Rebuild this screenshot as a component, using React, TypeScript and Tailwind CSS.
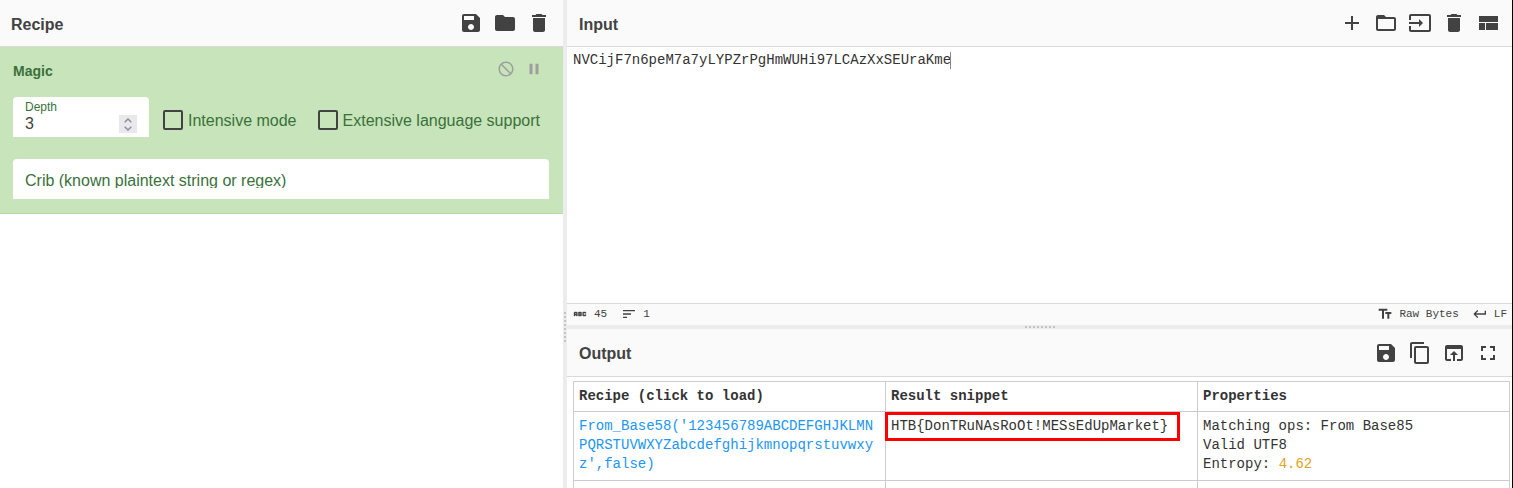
import React from "react";

const paths = {
  save: "M17 3H5c-1.11 0-2 .9-2 2v14c0 1.1.89 2 2 2h14c1.1 0 2-.9 2-2V7l-4-4zm-5 16c-1.66 0-3-1.34-3-3s1.34-3 3-3 3 1.34 3 3-1.34 3-3 3zm3-10H5V5h10v4z",
  folder: "M10 4H4c-1.1 0-1.99.9-1.99 2L2 18c0 1.1.9 2 2 2h16c1.1 0 2-.9 2-2V8c0-1.1-.9-2-2-2h-8l-2-2z",
  trash: "M6 19c0 1.1.9 2 2 2h8c1.1 0 2-.9 2-2V7H6v12zM19 4h-3.5l-1-1h-5l-1 1H5v2h14V4z",
  add: "M19 13h-6v6h-2v-6H5v-2h6V5h2v6h6v2z",
  folderOpen: "M20 6h-8l-2-2H4c-1.1 0-1.99.9-1.99 2L2 18c0 1.1.9 2 2 2h16c1.1 0 2-.9 2-2V8c0-1.1-.9-2-2-2zm0 12H4V8h16v10z",
  input: "M21 3.01H3c-1.1 0-2 .9-2 2V9h2V4.99h18v14.03H3V15H1v4.01c0 1.1.9 1.98 2 1.98h18c1.1 0 2-.88 2-1.98v-14c0-1.11-.9-2-2-2zM11 16l4-4-4-4v3H1v2h10v3z",
  layout: "M3 19h6v-7H3v7zm7 0h12v-7H10v7zM3 5v6h19V5H3z",
  copy: "M16 1H4c-1.1 0-2 .9-2 2v14h2V3h12V1zm3 4H8c-1.1 0-2 .9-2 2v14c0 1.1.9 2 2 2h11c1.1 0 2-.9 2-2V7c0-1.1-.9-2-2-2zm0 16H8V7h11v14z",
  openInBrowser: "M19 4H5c-1.11 0-2 .9-2 2v12c0 1.1.89 2 2 2h4v-2H5V8h14v10h-4v2h4c1.1 0 2-.9 2-2V6c0-1.1-.89-2-2-2zm-7 6l-4 4h3v6h2v-6h3l-4-4z",
  fullscreen: "M7 14H5v5h5v-2H7v-3zm-2-4h2V7h3V5H5v5zm12 7h-3v2h5v-5h-2v3zM14 5v2h3v3h2V5h-5z",
  sort: "M3 18h6v-2H3v2zM3 6v2h18V6H3zm0 7h12v-2H3v2z",
  textFields: "M2.5 4v3h5v12h3V7h5V4h-13zm19 5h-9v3h3v7h3v-7h3V9z",
  enter: "M19 7v4H5.83l3.58-3.59L8 6l-6 6 6 6 1.41-1.41L5.83 13H21V7z",
  disable: "M12 2C6.48 2 2 6.48 2 12s4.48 10 10 10 10-4.48 10-10S17.52 2 12 2zm0 18c-4.42 0-8-3.58-8-8 0-1.85.63-3.55 1.69-4.9L16.9 18.31C15.55 19.37 13.85 20 12 20zm6.31-3.1L7.1 5.69C8.45 4.63 10.15 4 12 4c4.42 0 8 3.58 8 8 0 1.85-.63 3.55-1.69 4.9z",
  pause: "M6 19h4V5H6v14zm8-14v14h4V5h-4z",
  abc: "M21 11h-1.5v-.5h-2v3h2V13H21v1c0 .55-.45 1-1 1h-3c-.55 0-1-.45-1-1v-4c0-.55.45-1 1-1h3c.55 0 1 .45 1 1v1zM8 10v5H6.5v-1.5h-2V15H3v-5c0-.55.45-1 1-1h3c.55 0 1 .45 1 1zm-1.5.5h-2V12h2v-1.5zM13.5 12c.55 0 1 .45 1 1v1c0 .55-.45 1-1 1h-4V9h4c.55 0 1 .45 1 1v1c0 .55-.45 1-1 1zM11 10.5v.75h2v-.75h-2zm2 2.25h-2v.75h2v-.75z",
};

type IconName = keyof typeof paths;

function Icon({ name, className }: { name: IconName; className: string }) {
  return (
    <svg viewBox="0 0 24 24" className={className} fill="currentColor" aria-hidden="true">
      <path d={paths[name]} />
    </svg>
  );
}

function Toolbar({ items }: { items: [IconName, string][] }) {
  return (
    <div className="flex gap-[10px]">
      {items.map(([name, label]) => (
        <button key={label} type="button" aria-label={label} className="block">
          <Icon name={name} className="block size-6" />
        </button>
      ))}
    </div>
  );
}

function Title({ children }: { children: string }) {
  return <h2 className="pt-[3px] text-base font-bold">{children}</h2>;
}

function Dots({ className }: { className: string }) {
  return (
    <div className={className}>
      {Array.from({ length: 8 }, (_, i) => (
        <span key={i} className="size-[2px] bg-[#c4c4c4]" />
      ))}
    </div>
  );
}

function Check({ label }: { label: string }) {
  return (
    <label className="flex items-center gap-[5px] whitespace-nowrap text-base text-[#3a713b]">
      <input
        type="checkbox"
        className="size-5 shrink-0 appearance-none rounded-[2px] border-2 border-[#424242]"
      />
      <span className="pt-[2px]">{label}</span>
    </label>
  );
}

function RecipePane() {
  return (
    <section className="min-w-0">
      <header className="flex h-[47px] items-center justify-between border-b border-[#dadada] bg-[#fafafa] pr-3 pl-[11px]">
        <Title>Recipe</Title>
        <Toolbar
          items={[
            ["save", "Save recipe"],
            ["folder", "Load recipe"],
            ["trash", "Clear recipe"],
          ]}
        />
      </header>
      <div className="border-b border-[#b3dba1] bg-[#c8e4ba] py-[13px] pr-[14px] pl-[13px]">
        <div className="flex h-[18px] items-center justify-between">
          <h3 className="pt-[4px] text-sm font-bold text-[#3a713b]">Magic</h3>
          <div className="flex gap-[10px] pr-[6px] text-[#9e9e9e]">
            <button type="button" aria-label="Disable operation">
              <Icon name="disable" className="block size-[18px]" />
            </button>
            <button type="button" aria-label="Set breakpoint">
              <Icon name="pause" className="block size-[18px]" />
            </button>
          </div>
        </div>
        <div className="mt-[19px] flex items-center">
          <div className="flex h-10 w-[136px] flex-col rounded-t bg-white px-3 pt-[3px]">
            <label htmlFor="depth" className="text-xs leading-[14px] text-[#3a713b]">
              Depth
            </label>
            <div className="flex h-5 items-center justify-between">
              <input
                id="depth"
                type="text"
                inputMode="numeric"
                defaultValue="3"
                className="h-5 w-16 text-base leading-5 outline-none"
              />
              <div className="flex size-[18px] flex-col items-center justify-center gap-[3px] bg-[#e9e9ed] text-[#8f8f9d]">
                <button type="button" aria-label="Increase depth">
                  <svg viewBox="0 0 8 5" className="block h-[5px] w-2" fill="none" stroke="currentColor" strokeWidth="1.5">
                    <path d="M.7 4.3 4 1l3.300 3.300" />
                  </svg>
                </button>
                <button type="button" aria-label="Decrease depth">
                  <svg viewBox="0 0 8 5" className="block h-[5px] w-2" fill="none" stroke="currentColor" strokeWidth="1.5">
                    <path d="M.7.7 4 4 7.300.7" />
                  </svg>
                </button>
              </div>
            </div>
          </div>
          <div className="ml-[14px] flex gap-[21px] pt-[6px]">
            <Check label="Intensive mode" />
            <Check label="Extensive language support" />
          </div>
        </div>
        <div className="mt-[22px] mb-px h-10 rounded-t bg-white px-3">
          <div className="h-[29px] overflow-hidden pt-3">
            <input
              type="text"
              aria-label="Crib (known plaintext string or regex)"
              placeholder="Crib (known plaintext string or regex)"
              className="block h-5 w-full text-base leading-5 outline-none placeholder:text-[#3a713b]"
            />
          </div>
        </div>
      </div>
    </section>
  );
}

function InputPane() {
  return (
    <section className="flex min-h-0 flex-col">
      <header className="flex h-[47px] shrink-0 items-center justify-between border-b border-[#dadada] bg-[#fafafa] px-3">
        <Title>Input</Title>
        <Toolbar
          items={[
            ["add", "Add input tab"],
            ["folderOpen", "Open folder"],
            ["input", "Open file"],
            ["trash", "Clear input"],
            ["layout", "Reset layout"],
          ]}
        />
      </header>
      <div className="flex flex-1 items-start overflow-hidden bg-white pt-1 pl-[6px]">
        <textarea
          aria-label="Input text"
          rows={1}
          spellCheck={false}
          defaultValue="NVCijF7n6peM7a7yLYPZrPgHmWUHi97LCAzXxSEUraKme"
          className="block resize-none overflow-hidden whitespace-pre font-['Liberation_Mono',monospace] text-sm leading-[18px] text-[#333] outline-none [field-sizing:content]"
        />
        <span className="-ml-px mt-px h-[17px] w-px bg-[#888]" />
      </div>
      <footer className="flex h-[22px] shrink-0 items-center justify-between border-t border-[#dadada] bg-[#fafafa] px-[5px] font-['Liberation_Mono',monospace] text-[11px]">
        <div className="flex items-center gap-[14px]">
          <span className="flex items-center gap-[6px]">
            <Icon name="abc" className="mb-[2px] size-4 stroke-current stroke-[0.6]" />
            45
          </span>
          <span className="flex items-center gap-[6px]">
            <Icon name="sort" className="mb-[2px] size-4" />1
          </span>
        </div>
        <div className="flex items-center gap-[13px]">
          <button type="button" className="flex items-center gap-[6px]">
            <Icon name="textFields" className="mb-[2px] size-4" />
            Raw Bytes
          </button>
          <button type="button" className="flex items-center gap-[6px]">
            <Icon name="enter" className="mb-[2px] size-4" />
            LF
          </button>
        </div>
      </footer>
    </section>
  );
}

const headCell = "border border-[#ccc] px-[5px] py-[5px] text-left align-top";
const bodyCell = "border border-[#ccc] px-[5px] pt-[5px] pb-[6px] text-left align-top";

function OutputPane() {
  return (
    <section className="min-h-0 overflow-hidden bg-white">
      <header className="flex h-12 items-center justify-between border-b border-[#dadada] bg-[#fafafa] px-3">
        <Title>Output</Title>
        <Toolbar
          items={[
            ["save", "Save output"],
            ["copy", "Copy output"],
            ["openInBrowser", "Move output to input"],
            ["fullscreen", "Maximise output"],
          ]}
        />
      </header>
      <div className="pt-1 pr-[2px] pl-[6px]">
        <table className="w-full table-fixed border-collapse font-['Liberation_Mono',monospace] text-sm leading-[19px] text-[#333]">
          <thead>
            <tr>
              <th className={headCell}>Recipe (click to load)</th>
              <th className={headCell}>Result snippet</th>
              <th className={headCell}>Properties</th>
            </tr>
          </thead>
          <tbody>
            <tr>
              <td className={bodyCell}>
                <a href="#recipe" className="break-all text-[#2196f3]">
                  From_Base58('123456789ABCDEFGHJKLMNPQRSTUVWXYZabcdefghijkmnopqrstuvwxyz',false)
                </a>
              </td>
              <td className={bodyCell}>
                <span className="relative inline-block">
                  HTB&#123;DonTRuNAsRoOt!MESsEdUpMarket&#125;
                  <span className="absolute -top-[5px] -right-3 -bottom-[5px] -left-[6px] border-3 border-[#f00]" />
                </span>
              </td>
              <td className={bodyCell}>
                Matching ops: From Base85
                <br />
                Valid UTF8
                <br />
                Entropy: <span className="text-[#daa520]">4.62</span>
              </td>
            </tr>
            <tr className="h-8">
              <td className={bodyCell} />
              <td className={bodyCell} />
              <td className={bodyCell} />
            </tr>
          </tbody>
        </table>
      </div>
    </section>
  );
}

export default function App() {
  return (
    <main className="grid h-screen grid-cols-[minmax(0,563fr)_4px_minmax(0,945fr)] overflow-hidden border-r border-black bg-white font-['Liberation_Sans',Arial,sans-serif] text-[#424242]">
      <RecipePane />
      <div className="flex flex-col items-center bg-[#ececec]">
        <div className="flex-[312]" />
        <Dots className="flex flex-col gap-[2px]" />
        <div className="flex-[146]" />
      </div>
      <div className="grid min-h-0 grid-rows-[minmax(0,325fr)_4px_minmax(0,159fr)]">
        <InputPane />
        <Dots className="flex items-center justify-center gap-[2px] bg-[#ececec]" />
        <OutputPane />
      </div>
    </main>
  );
}
